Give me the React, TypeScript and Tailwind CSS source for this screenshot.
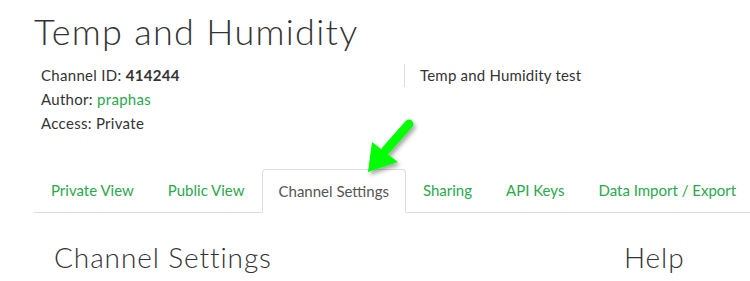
export default function App() {
  const tabs = ["Private View", "Public View", "Channel Settings", "Sharing", "API Keys", "Data Import / Export"];
  const active = "Channel Settings";

  return (
    <main className="relative w-[750px] h-[281px] overflow-hidden bg-white text-[#333]" style={{ fontFamily: "Lato, sans-serif" }}>
      <div className="pl-[34px] pt-[9px]">
        {/* Title */}
        <h1 className="text-[36px] leading-[44px] font-light tracking-[1.3px]">Temp and Humidity</h1>

        {/* Channel meta */}
        <div className="flex mt-[10px]">
          <div className="w-[370px] pl-[7px] text-[15px] tracking-[0.3px] leading-[24px]">
            <div>
              Channel ID: <span className="font-bold">414244</span>
            </div>
            <div>
              Author: <span className="text-[#2aa84c]">praphas</span>
            </div>
            <div>Access: Private</div>
          </div>
          <div className="border-l border-[#ddd] h-[23px] mt-[1px] pl-[15px] text-[15px] tracking-[0.2px] leading-[23px]">
            Temp and Humidity test
          </div>
        </div>

        {/* Tabs */}
        <div className="flex mt-[34px] border-b border-[#ddd] h-[44px] text-[15px] whitespace-nowrap">
          {tabs.map((t) =>
            t === active ? (
              <div
                key={t}
                className="shrink-0 px-[16px] h-[44px] flex items-center border border-[#ddd] border-b-white rounded-t-[4px] bg-white text-[#555]"
              >
                {t}
              </div>
            ) : (
              <div key={t} className="shrink-0 px-[17px] h-[43px] flex items-center text-[#2aa84c]">
                {t}
              </div>
            )
          )}
        </div>

        {/* Section headings */}
        <div className="flex mt-[23px] pl-[20px] text-[28px] font-light tracking-[0.9px]">
          <h2 className="w-[570px]">Channel Settings</h2>
          <h2>Help</h2>
        </div>
      </div>

      {/* Pointer arrow */}
      <svg className="absolute left-0 top-0" width="750" height="281" viewBox="0 0 750 281">
        <defs>
          <filter id="sh" x="-50%" y="-50%" width="200%" height="200%">
            <feDropShadow dx="2" dy="3" stdDeviation="2" floodColor="#000" floodOpacity="0.35" />
          </filter>
        </defs>
        <g filter="url(#sh)">
          <line x1="409" y1="124" x2="386" y2="150" stroke="#00ff00" strokeWidth="9" strokeLinecap="round" />
          <polygon points="368,172 372,142 398,162" fill="#00ff00" />
        </g>
      </svg>
    </main>
  );
}
